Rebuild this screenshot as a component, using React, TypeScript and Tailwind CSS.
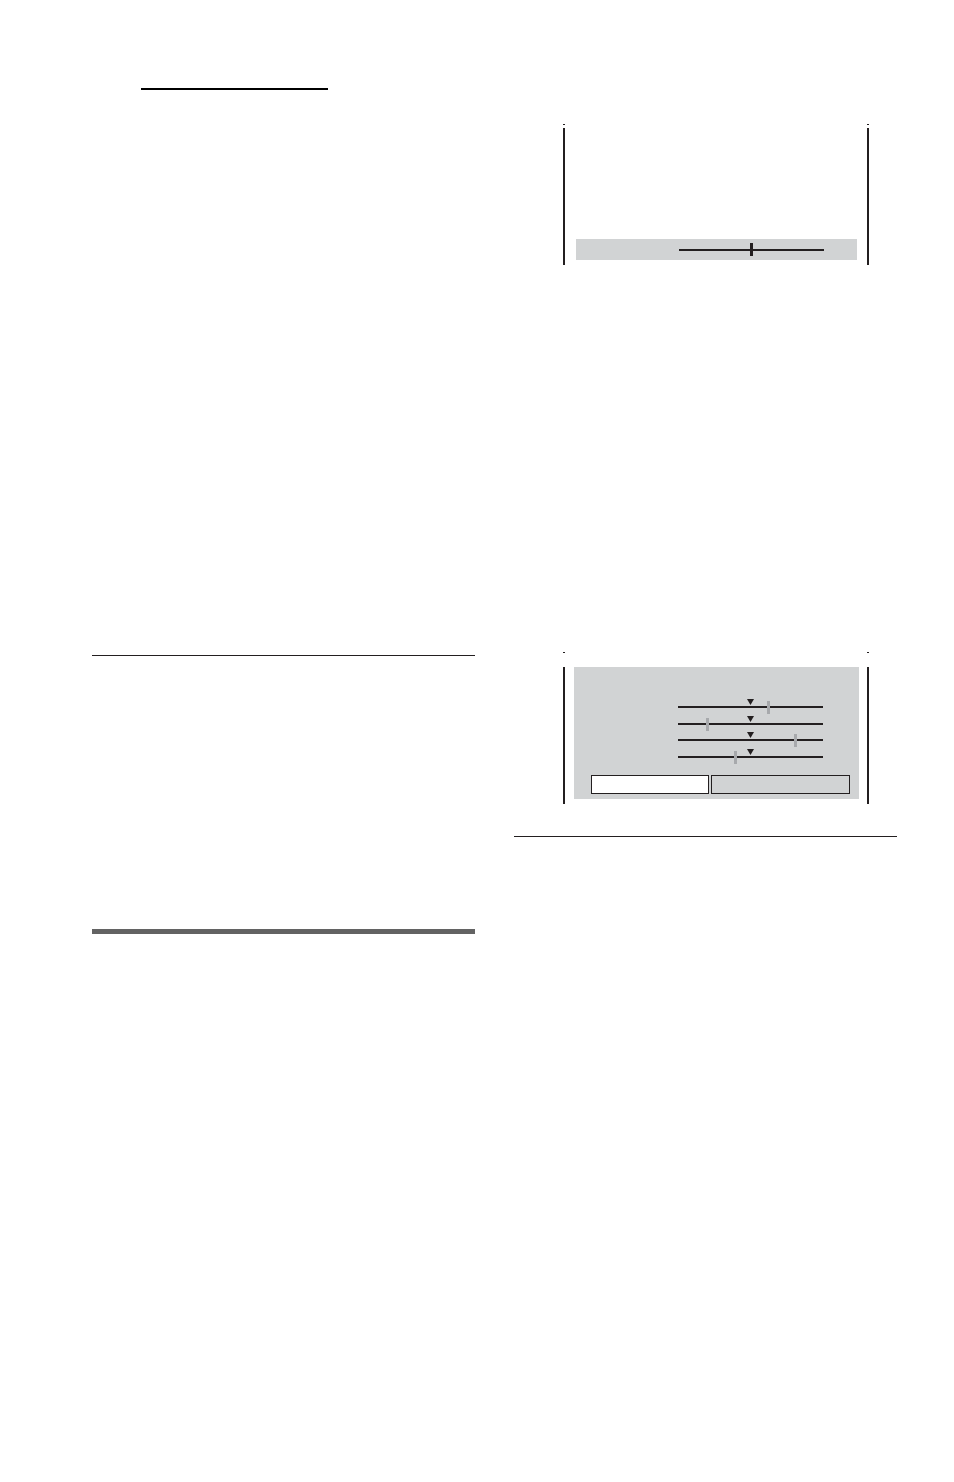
import React from 'react';

// one row of the picture-adjust panel: line, centre arrow, grey setting mark
const AdjustRow = ({ mark, top }: { mark: number; top: string }) => (
	<div className={`relative w-[145px] h-[2px] bg-[#231f20] ${top}`}>
		<svg className="absolute left-[69px] -top-[7px] w-[7px] h-[6px]" viewBox="0 0 7 6">
			<polygon points="0,0 7,0 3.5,6" fill="#231f20" />
		</svg>
		<div className="absolute -top-[5px] w-[3px] h-[13px] bg-[#a7a9ac]" style={{ left: mark }} />
	</div>
);

const ScreenTicks = () => (
	<div className="flex justify-between h-px">
		<div className="w-[2px] h-px bg-[#231f20]" />
		<div className="w-[2px] h-px bg-[#231f20]" />
	</div>
);

const App = () => {
	return (
		<div className="w-[954px] h-[1482px] bg-white flex">
			{/* left column */}
			<div className="ml-[92px] w-[383px] flex flex-col">
				<div className="mt-[88px] ml-[49px] w-[187px] h-[2px] bg-black" />
				<div className="mt-[565px] h-px bg-[#231f20]" />
				<div className="mt-[273px] h-[5px] bg-[#636363]" />
			</div>

			{/* right column */}
			<div className="ml-[39px] w-[383px] flex flex-col">
				{/* screen 1: single slider */}
				<div className="mt-[124px] ml-[49px] w-[306px]">
					<ScreenTicks />
					<div className="mt-[3px] h-[137px] border-x-2 border-[#231f20] pl-[11px] pr-[10px] pt-[111px]">
						<div className="h-[21px] bg-[#d1d3d4] flex items-center">
							<div className="relative ml-[103px] w-[145px] h-[2px] bg-[#231f20]">
								<div className="absolute left-[71px] -top-[6px] w-[3px] h-[13px] bg-[#231f20]" />
							</div>
						</div>
					</div>
				</div>

				{/* screen 2: four sliders and two buttons */}
				<div className="mt-[387px] ml-[49px] w-[306px]">
					<ScreenTicks />
					<div className="mt-[14px] h-[137px] border-x-2 border-[#231f20] pl-[9px] pr-[8px]">
						<div className="h-[132px] bg-[#d1d3d4] flex flex-col">
							<div className="ml-[104px] pt-[39px] flex flex-col">
								<AdjustRow mark={89} top="" />
								<AdjustRow mark={28} top="mt-[15px]" />
								<AdjustRow mark={116} top="mt-[14px]" />
								<AdjustRow mark={56} top="mt-[15px]" />
							</div>
							<div className="mt-[17px] ml-[17px] flex gap-[2px]">
								<div className="w-[118px] h-[19px] bg-white border border-[#231f20]" />
								<div className="w-[139px] h-[19px] bg-[#d1d3d4] border border-[#231f20]" />
							</div>
						</div>
					</div>
				</div>

				<div className="mt-[32px] h-px bg-[#231f20]" />
			</div>
		</div>
	);
};

export default App;
